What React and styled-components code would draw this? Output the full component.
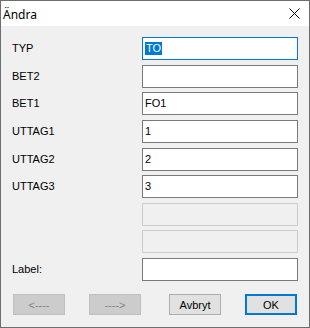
import React from 'react';
import styled, { createGlobalStyle } from 'styled-components';

const Global = createGlobalStyle`
  html, body { margin: 0; padding: 0; background: #f0f0f0; }
  * { box-sizing: border-box; }
`;

const Window = styled.div`
  width: 310px;
  height: 328px;
  border: 1px solid #6d6d6d;
  background: #f0f0f0;
  display: flex;
  flex-direction: column;
  font-family: "Liberation Sans", Arial, sans-serif;
  font-size: 11px;
  color: #000;
`;

const TitleBar = styled.div`
  height: 25px;
  background: #fff;
  display: flex;
  align-items: center;
  justify-content: space-between;
  padding: 0 9px 0 2px;
`;

const Title = styled.span`
  font-family: "Noto Sans", "Open Sans", sans-serif;
  font-size: 12px;
  padding-top: 1px;
`;

const Body = styled.div`
  flex: 1;
  display: flex;
  flex-direction: column;
  padding: 11px 11px 0 11px;
`;

const Form = styled.div`
  display: grid;
  grid-template-columns: 130px 156px;
  grid-auto-rows: 23px;
  row-gap: 4.625px;
  align-items: center;
`;

const Label = styled.span`
  line-height: 13px;
`;

const Field = styled.div`
  height: 23px;
  border: 1px solid ${p => (p.$focus ? '#0078d7' : p.$disabled ? '#cccccc' : '#7a7a7a')};
  background: ${p => (p.$disabled ? '#f0f0f0' : '#fff')};
  display: flex;
  align-items: center;
  padding-left: 2px;
  line-height: 13px;
`;

const Selected = styled.span`
  background: #0078d7;
  color: #fff;
  padding: 0 1px;
`;

const ButtonRow = styled.div`
  display: flex;
  justify-content: space-between;
  padding: 0 1px;
  margin-top: 13px;
`;

const Group = styled.div`
  display: flex;
  gap: 24px;
`;

const Button = styled.div`
  width: 52px;
  height: 21px;
  display: flex;
  align-items: center;
  justify-content: center;
  background: ${p => (p.$disabled ? '#cccccc' : '#e1e1e1')};
  border: ${p => (p.$default ? '2px solid #0078d7' : p.$disabled ? '1px solid #bfbfbf' : '1px solid #adadad')};
  color: ${p => (p.$disabled ? '#838383' : '#000')};
  font-size: 11px;
`;

const rows = [
  { label: 'TYP', value: 'TO', focus: true },
  { label: 'BET2', value: '' },
  { label: 'BET1', value: 'FO1' },
  { label: 'UTTAG1', value: '1' },
  { label: 'UTTAG2', value: '2' },
  { label: 'UTTAG3', value: '3' },
  { label: '', value: '', disabled: true },
  { label: '', value: '', disabled: true },
  { label: 'Label:', value: '' },
];

export default function App() {
  return (
    <>
      <Global />
      <Window>
        <TitleBar>
          <Title>Ändra</Title>
          <svg width="11" height="11" viewBox="0 0 11 11">
            <path d="M0.5 0.5 L10.5 10.5 M10.5 0.5 L0.5 10.5" stroke="#000" strokeWidth="1" />
          </svg>
        </TitleBar>
        <Body>
          <Form>
            {rows.map((r, i) => (
              <React.Fragment key={i}>
                <Label>{r.label}</Label>
                <Field $focus={r.focus} $disabled={r.disabled}>
                  {r.focus ? <Selected>{r.value}</Selected> : r.value}
                </Field>
              </React.Fragment>
            ))}
          </Form>
          <ButtonRow>
            <Group>
              <Button $disabled>&lt;----</Button>
              <Button $disabled>----&gt;</Button>
            </Group>
            <Group>
              <Button>Avbryt</Button>
              <Button $default>OK</Button>
            </Group>
          </ButtonRow>
        </Body>
      </Window>
    </>
  );
}
